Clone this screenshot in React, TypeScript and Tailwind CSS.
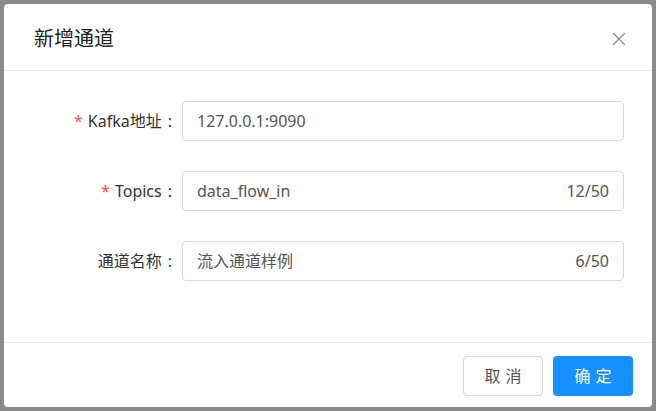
import { X } from "lucide-react";

interface Field {
  label: string;
  required?: boolean;
  value: string;
  count?: string;
}

const fields: Field[] = [
  { label: "Kafka地址", required: true, value: "127.0.0.1:9090" },
  { label: "Topics", required: true, value: "data_flow_in", count: "12/50" },
  { label: "通道名称", value: "流入通道样例", count: "6/50" },
];

export default function App() {
  return (
    <div className="h-[411px] w-[656px] bg-[#8a8a8a] p-1 font-['Noto_Sans','Noto_Sans_CJK_SC',sans-serif]">
      <div className="flex h-full flex-col rounded bg-white">
        {/* header */}
        <div className="flex h-[67px] shrink-0 items-center justify-between border-b border-[#e8e8e8] pt-[3px] pl-[30px] pr-[22px]">
          <h2 className="text-[20px] text-[#222]">新增通道</h2>
          <X className="h-[22px] w-[22px] text-[#8c8c8c]" strokeWidth={1.3} />
        </div>

        {/* body */}
        <div className="flex flex-1 flex-col gap-[30px] pt-[30px] pr-[28px]">
          {fields.map((f) => (
            <div key={f.label} className="flex items-center">
              <label className="w-[178px] shrink-0 pr-[10px] text-right text-[16px] text-[#333]">
                {f.required && <span className="mr-[5px] text-[#ff4d4f]">*</span>}
                {f.label}
                <span className="ml-[6px]">:</span>
              </label>
              <div className="flex h-10 flex-1 items-center justify-between rounded border border-[#d9d9d9] px-[14px] text-[16px] text-[#555]">
                <span>{f.value}</span>
                {f.count && <span>{f.count}</span>}
              </div>
            </div>
          ))}
        </div>

        {/* footer */}
        <div className="flex h-[65px] shrink-0 items-start justify-end gap-[10px] border-t border-[#e8e8e8] pt-[13px] pr-[19px]">
          <button className="h-10 w-20 rounded border border-[#d9d9d9] bg-white pl-[0.3em] text-[16px] tracking-[0.3em] text-[#555]">
            取消
          </button>
          <button className="h-10 w-20 rounded bg-[#1890ff] pl-[0.3em] text-[16px] tracking-[0.3em] text-white">
            确定
          </button>
        </div>
      </div>
    </div>
  );
}
